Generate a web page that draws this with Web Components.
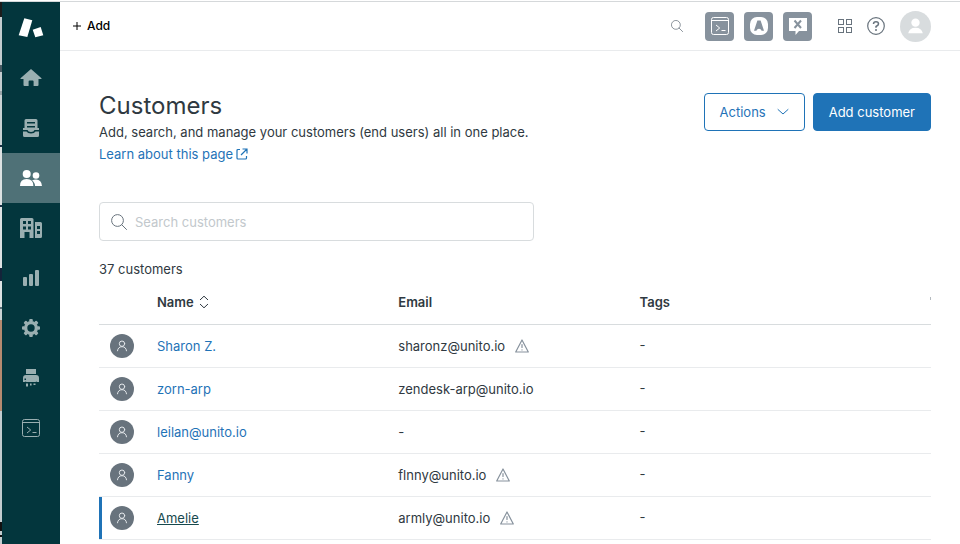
<!DOCTYPE html>
<html lang="en">
<head>
<meta charset="utf-8">
<title>Customers</title>
<style>
  html, body { margin: 0; }
  body {
    --ink: #2f3941;
    --blue: #1f73b7;
    --line: #e9ebed;
    --teal: #03363d;
    font: 13px/20px Inter, "Liberation Sans", sans-serif;
    color: var(--ink);
    background: #fff;
  }
</style>
</head>
<body>
<app-shell>
  <side-nav slot="nav"></side-nav>
  <top-bar slot="top"></top-bar>
  <page-heading>
    <span slot="title">Customers</span>
    <span slot="text">Add, search, and manage your customers (end users) all in one place.</span>
    <span slot="link">Learn about this page</span>
    <action-button slot="actions" chevron>Actions</action-button>
    <action-button slot="actions" primary>Add customer</action-button>
  </page-heading>
  <search-field></search-field>
  <customer-table count="37"></customer-table>
</app-shell>

<script>
const ICONS = {
  logo: ['0 0 26 20', '<path fill="#fff" d="M6.300 .3 14.300 2.300 9.300 19 .7 17.300Z"/><path fill="#fff" d="M14.700 11.700 22.700 9 25.300 17.300 17.300 19.300Z"/>'],
  home: ['0 0 22 20', '<path fill="currentColor" d="M11 1 21.5 10.2Q22 11 21 11H18.5V17q0 1-1 1H13.6V13.5q0-1-1-1H9.6q-1 0-1 1V18H4.500q-1 0-1-1V11H1Q0 11 .5 10.200Z"/>'],
  views: ['0 0 16 18', '<path fill="currentColor" fill-rule="evenodd" d="M3 0H13Q14.500 0 14.500 1.500V9H16V11H11.500Q11 13 8 13T4.500 11H0V9H1.500V1.500Q1.500 0 3 0ZM4 3V4.600H12V3ZM4 7V8.600H12V7Z"/><path fill="currentColor" d="M0 12.500H3.500Q4.500 14.500 8 14.500T12.500 12.500H16V16.500Q16 18 14.500 18H1.500Q0 18 0 16.500Z"/>'],
  people: ['0 0 22 18', '<g fill="currentColor"><circle cx="6.700" cy="5" r="4"/><circle cx="16" cy="6.500" r="3.300"/><path d="M0 17Q0 10 6.700 10T13.400 17Z"/><path d="M12 11.500Q14 10.400 16 10.400 21.500 10.400 22 17H15Q15 13.500 12 11.500Z"/></g>'],
  building: ['0 0 22 20', '<path fill="currentColor" fill-rule="evenodd" d="M1.500 0H12Q13.500 0 13.500 1.500V20H9.500V14H4.500V20H0V1.500Q0 0 1.500 0ZM3 3V6H6V3ZM8 3V6H11V3ZM3 8.500V11.500H6V8.500ZM8 8.500V11.500H11V8.500ZM15 4H20.500Q22 4 22 5.500V18.500Q22 20 20.500 20H15ZM17 8V11H20V8ZM17 13V16H20V13Z"/>'],
  bars: ['0 0 16 16', '<g fill="currentColor"><rect y="7" width="4" height="9" rx="1"/><rect x="6" y="4" width="4" height="12" rx="1"/><rect x="12" width="4" height="16" rx="1"/></g>'],
  gear: ['-9 -9 18 18', '<g fill="currentColor"><path fill-rule="evenodd" d="M0-7A7 7 0 1 1 0 7 7 7 0 0 1 0-7ZM0-3.700A3.700 3.700 0 1 0 0 3.700 3.700 3.700 0 0 0 0-3.700Z"/><g id="g"><rect x="-1.800" y="-9" width="3.600" height="3" rx="1"/><rect x="-1.800" y="6" width="3.600" height="3" rx="1"/><rect x="-9" y="-1.800" width="3" height="3.600" rx="1"/><rect x="6" y="-1.800" width="3" height="3.600" rx="1"/></g><use href="#g" transform="rotate(45)"/></g>'],
  printer: ['0 0 16 18', '<g fill="currentColor"><path d="M3 0H13V5H3Z"/><path fill-rule="evenodd" d="M3 6H13Q16 6 16 9V13H14Q13.500 12 12.500 13H3.500Q2.500 12 2 13H0V9Q0 6 3 6ZM1.500 9.500V11H3V9.500Z"/><path d="M3 14.500H5V17.500H3ZM7 14.500H8.600V16.500H7ZM10.500 14.500H12.500V16H10.500Z"/></g>'],
  terminal: ['0 0 18 18', '<g fill="none" stroke="currentColor"><rect x=".5" y=".5" width="17" height="17" rx="2"/><path d="M.5 3.500H17.500M5 8 8.700 11 5 14M10.500 13.500H14.500"/></g>'],
  plus: ['0 0 10 10', '<path stroke="currentColor" fill="none" d="M5 1V9M1 5H9"/>'],
  search: ['0 0 16 16', '<g fill="none" stroke="currentColor"><circle cx="6.500" cy="6.500" r="5.900"/><path stroke-linecap="round" d="M10.800 10.800 15.500 15.500"/></g>'],
  letter: ['0 0 20 20', '<rect x="1" y="1" width="18" height="18" rx="7" fill="#fff"/><path fill="#87929d" d="M8.400 4.500H11.600L15 14.800H12.600L11.900 13.400Q10 12.200 8.100 13.400L7.400 14.800H5Z"/>'],
  bubble: ['0 0 20 20', '<path fill="#fff" d="M1 2H19V15H11L7.500 19V15H1Z"/><path stroke="#87929d" stroke-width="2" d="M6.500 4.500 13 12M13 4.500 6.500 12"/>'],
  grid: ['0 0 14 14', '<g fill="none" stroke="currentColor"><rect x=".5" y=".5" width="5" height="5"/><rect x="8.500" y=".5" width="5" height="5"/><rect x=".5" y="8.500" width="5" height="5"/><rect x="8.500" y="8.500" width="5" height="5"/></g>'],
  help: ['0 0 18 18', '<g fill="none" stroke="currentColor" stroke-width="1.200"><circle cx="9" cy="9" r="8.300"/><path stroke-width="1.500" d="M6.500 7Q6.500 4.800 9 4.800T11.500 7Q11.500 8.300 9 9.500V10.800"/></g><circle cx="9" cy="13" r="1" fill="currentColor"/>'],
  user: ['0 0 32 32', '<g fill="#fff"><circle cx="16" cy="12" r="4.300"/><path d="M8.500 23Q9.500 17.200 16 17.200T23.500 23Z"/></g>'],
  chevron: ['0 0 12 8', '<path fill="none" stroke="currentColor" stroke-linecap="round" stroke-linejoin="round" d="M1 1.500 6 6 11 1.500"/>'],
  external: ['0 0 12 12', '<path fill="none" stroke="currentColor" stroke-width="1.200" d="M4 1.500H2Q1 1.500 1 2.500V10Q1 11 2 11H9.500Q10.500 11 10.500 10V8M6.500 1H11V5.500M11 1 5 7"/>'],
  sort: ['0 0 10 14', '<path fill="none" stroke="currentColor" stroke-linecap="round" stroke-linejoin="round" d="M1.300 4.700 5 1.200 8.700 4.700M1.300 9.300 5 12.800 8.700 9.300"/>'],
  person: ['0 0 24 24', '<circle cx="12" cy="12" r="12" fill="#68737d"/><g fill="none" stroke="#e4e8eb" stroke-linecap="round"><circle cx="12" cy="9.700" r="2.700"/><path d="M7.500 16.800Q8 12.700 12 12.700T16.500 16.800"/></g>'],
  warning: ['0 0 14 14', '<g fill="none" stroke="#87929d" stroke-width="1.200" stroke-linejoin="round"><path d="M7 1 13.300 13H.7Z"/><path stroke-linecap="round" d="M7 5.500V8.500M7 10.800V11"/></g>']
};
const icon = (name, w, h = w) =>
  `<svg viewBox="${ICONS[name][0]}" width="${w}" height="${h}" aria-hidden="true">${ICONS[name][1]}</svg>`;

function define(tag, render) {
  customElements.define(tag, class extends HTMLElement {
    constructor() {
      super();
      this.attachShadow({ mode: 'open' });
    }
    connectedCallback() {
      this.shadowRoot.innerHTML = `<style>*{box-sizing:border-box}svg{display:block;flex:none}</style>` + render(this);
    }
  });
}

define('app-shell', () => `
  <style>
    :host { display: flex; flex-direction: column; min-height: 100vh; }
    .edge { height: 2px; border-bottom: 1px solid #d5d8da; }
    .body { flex: 1; display: grid; grid-template-columns: 2px 58px minmax(0, 1fr); }
    .behind { background: linear-gradient(#1c1c1c 15px, #c3cccf 15px 63px, #4a5b64 63px 70px, #c3cccf 70px 89px, #9aa5a9 89px 93px, #c9d2d4 93px 143px, #1b2f45 143px 145px, #dde2e3 145px 203px, #1b2f45 203px 205px, #dde2e3 205px 266px, #14243a 266px 279px, #dde2e3 279px 305px, #5c6f78 305px 307px, #c9d2d4 307px 318px, #b58a70 318px 409px, #c3cccf 409px 520px, #111 520px 529px, #c3cccf 529px 533px, #111 533px 535px, #c3cccf 535px); }
    main { padding: 41px 29px 0 39px; }
  </style>
  <div class="edge"></div>
  <div class="body">
    <div class="behind"></div>
    <slot name="nav"></slot>
    <div><slot name="top"></slot><main><slot></slot></main></div>
  </div>`);

define('side-nav', () => {
  const items = [['home', 'Home', 22, 20], ['views', 'Views', 16, 18], ['people', 'Customers', 22, 18],
    ['building', 'Organizations', 22, 20], ['bars', 'Reporting', 16, 16], ['gear', 'Admin', 18, 18],
    ['printer', 'Print', 16, 18], ['terminal', 'Console', 18, 18]];
  return `
  <style>
    :host { display: block; background: var(--teal); color: #9aafb1; }
    .logo { height: 51px; display: grid; place-items: center; }
    a { height: 50px; display: grid; place-items: center; color: inherit; }
    a[aria-current] { background: #4f7177; color: #fff; }
  </style>
  <div class="logo">${icon('logo', 26, 20)}</div>
  <nav>${items.map(([n, label, w, h]) =>
    `<a href="#${n}" aria-label="${label}"${n === 'people' ? ' aria-current="page"' : ''}>${icon(n, w, h)}</a>`).join('')}</nav>`;
});

define('top-bar', () => `
  <style>
    :host { display: flex; align-items: center; height: 48px; border-bottom: 1px solid var(--line); padding: 0 29px 0 12px; }
    button { font: inherit; color: #68737d; border: 0; padding: 0; background: none; display: grid; place-items: center; }
    .add { display: flex; gap: 5px; color: #000; font-size: 12px; font-weight: 500; margin-right: auto; }
    .apps { display: flex; gap: 10px; margin: 0 26px 0 22px; }
    .apps button { width: 29px; height: 29px; border-radius: 4px; background: #87929d; color: #fff; }
    .tools { display: flex; align-items: center; gap: 15px; }
    .user { width: 31px; height: 31px; border-radius: 50%; background: #d8dcde; }
  </style>
  <button class="add">${icon('plus', 10)}Add</button>
  <button aria-label="Search">${icon('search', 12)}</button>
  <div class="apps">
    <button aria-label="Console">${icon('terminal', 18)}</button>
    <button aria-label="App">${icon('letter', 20)}</button>
    <button aria-label="Messages">${icon('bubble', 20)}</button>
  </div>
  <div class="tools">
    <button aria-label="Products">${icon('grid', 14)}</button>
    <button aria-label="Help">${icon('help', 18)}</button>
    <button class="user" aria-label="Profile">${icon('user', 31)}</button>
  </div>`);

define('page-heading', () => `
  <style>
    :host { display: flex; justify-content: space-between; align-items: flex-start; }
    h1 { margin: 0; font-size: 24px; line-height: 28px; font-weight: 400; }
    p { margin: 2px 0; }
    a { color: var(--blue); text-decoration: none; display: inline-flex; align-items: center; gap: 3px; }
    .actions { display: flex; gap: 8px; padding-top: 1px; }
  </style>
  <div>
    <h1><slot name="title"></slot></h1>
    <p><slot name="text"></slot></p>
    <a href="#learn"><slot name="link"></slot>${icon('external', 12)}</a>
  </div>
  <div class="actions"><slot name="actions"></slot></div>`);

define('action-button', el => `
  <style>
    :host { display: block; }
    button { font: inherit; line-height: 20px; height: 38px; padding: 0 15px; display: flex; align-items: center; gap: 11px;
      border: 1px solid var(--blue); border-radius: 4px; background: #fff; color: var(--blue); white-space: nowrap; }
    :host([primary]) button { background: var(--blue); color: #fff; }
  </style>
  <button><slot></slot>${el.hasAttribute('chevron') ? icon('chevron', 12, 8) : ''}</button>`);

define('search-field', () => `
  <style>
    :host { display: block; margin-top: 38px; }
    label { display: flex; align-items: center; gap: 8px; width: 435px; max-width: 100%; height: 39px; padding: 0 11px;
      border: 1px solid #d8dcde; border-radius: 4px; color: #68737d; }
    input { flex: 1; min-width: 0; font: inherit; color: inherit; border: 0; padding: 0; outline: 0; background: none; }
    input::placeholder { color: #c2c8cc; opacity: 1; }
  </style>
  <label>${icon('search', 16)}<input type="search" placeholder="Search customers" aria-label="Search customers"></label>`);

define('customer-table', el => {
  const rows = [
    ['Sharon Z.', 'sharonz@unito.io', true],
    ['zorn-arp', 'zendesk-arp@unito.io'],
    ['leilan@unito.io', '-'],
    ['Fanny', 'flnny@unito.io', true],
    ['Amelie', 'armly@unito.io', true]];
  return `
  <style>
    :host { display: block; margin-top: 18px; }
    table { width: 100%; table-layout: fixed; border-collapse: separate; border-spacing: 0; }
    caption { text-align: left; }
    .c1 { width: 58px; } .c2, .c3 { width: 29%; }
    th, td { text-align: left; padding: 0; height: 43px; border-bottom: 1px solid var(--line); }
    th { font-weight: 600; height: 46px; border-color: #d8dcde; }
    th:last-child { background: linear-gradient(#b4babf, #b4babf) 100% 18px / 1px 3px no-repeat; }
    td:first-child { padding-left: 11px; }
    td:last-child { padding-bottom: 3px; }
    button { font: inherit; color: inherit; border: 0; padding: 0; background: none; }
    button, .mail { display: flex; align-items: center; }
    button { gap: 5px; }
    .mail { gap: 10px; }
    a { color: var(--blue); text-decoration: none; }
    tr:last-child a { color: #17494d; text-decoration: underline; }
    tbody tr:last-child td:first-child { box-shadow: inset 3px 0 var(--blue); }
  </style>
  <table>
    <caption>${el.getAttribute('count')} customers</caption>
    <colgroup><col class="c1"><col class="c2"><col class="c3"><col></colgroup>
    <thead><tr><th></th><th><button>Name${icon('sort', 10, 14)}</button></th><th>Email</th><th>Tags</th></tr></thead>
    <tbody>${rows.map(([name, mail, warn]) => `<tr><td>${icon('person', 24)}</td><td><a href="#customer">${name}</a></td>
      <td><span class="mail">${mail}${warn ? icon('warning', 14) : ''}</span></td><td>-</td></tr>`).join('')}</tbody>
  </table>`;
});
</script>
</body>
</html>
